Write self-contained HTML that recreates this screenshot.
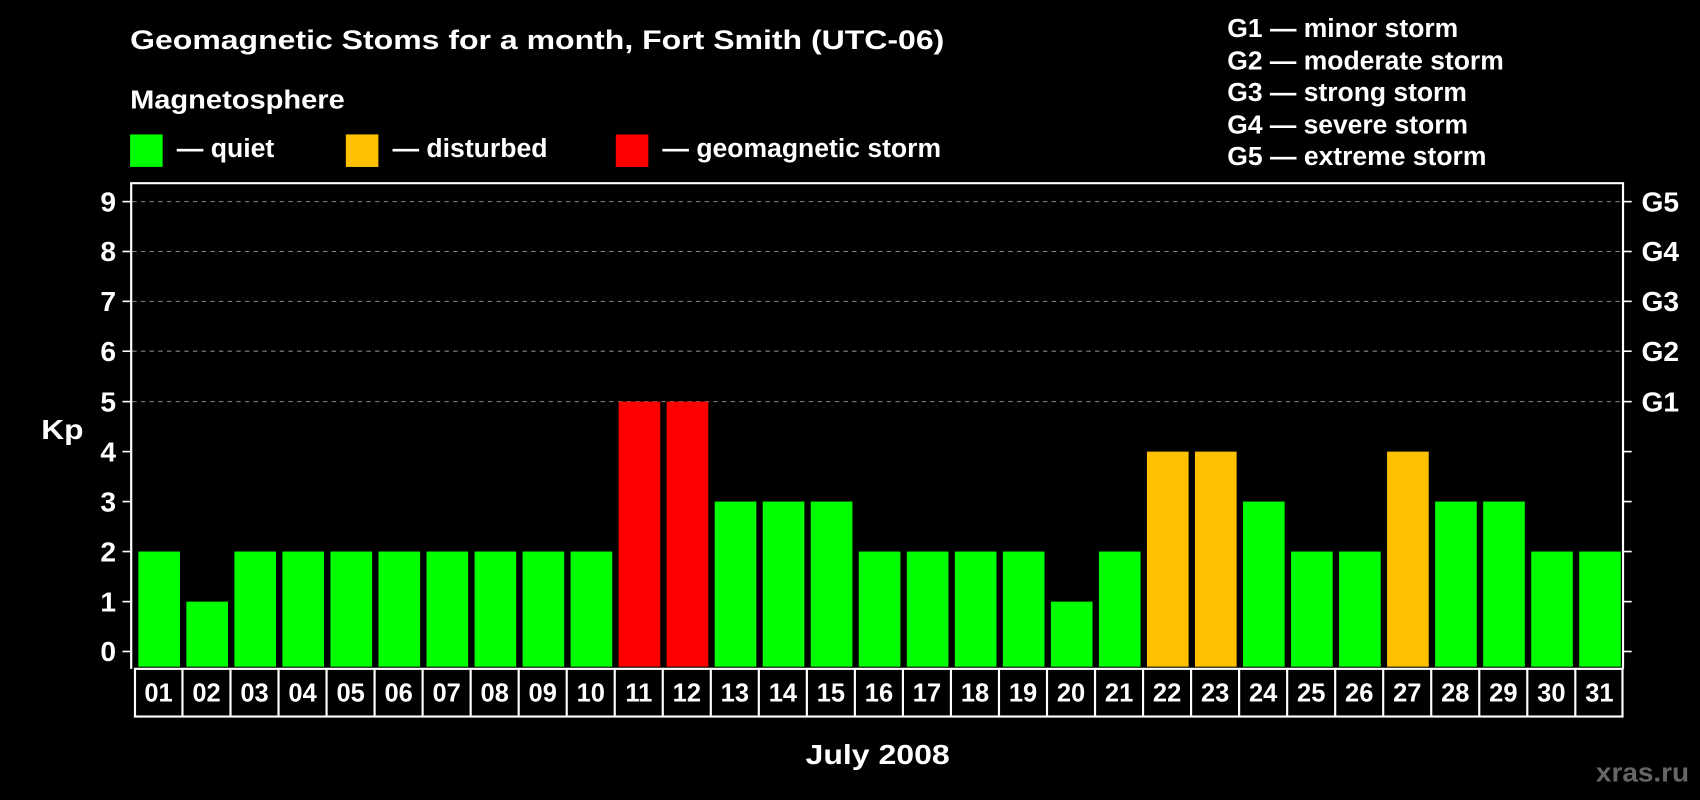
<!DOCTYPE html>
<html><head><style>html,body{margin:0;padding:0;background:#000;overflow:hidden}svg{display:block}text{font-family:"Liberation Sans",sans-serif;font-weight:bold;fill:#fff}</style></head>
<body>
<svg width="1700" height="800" viewBox="0 0 1568 738" preserveAspectRatio="none" xmlns="http://www.w3.org/2000/svg">
<rect width="1568" height="738" fill="#000"/>
<text x="120" y="45" font-size="25" textLength="751" lengthAdjust="spacingAndGlyphs">Geomagnetic Stoms for a month, Fort Smith (UTC-06)</text>
<text x="120" y="100" font-size="24" textLength="198" lengthAdjust="spacingAndGlyphs">Magnetosphere</text>
<rect x="120" y="124" width="30" height="30" fill="#00ff00"/>
<text x="163" y="145" font-size="24" textLength="90" lengthAdjust="spacingAndGlyphs">— quiet</text>
<rect x="319" y="124" width="30" height="30" fill="#ffc000"/>
<text x="362" y="145" font-size="24" textLength="143" lengthAdjust="spacingAndGlyphs">— disturbed</text>
<rect x="568" y="124" width="30" height="30" fill="#ff0000"/>
<text x="611" y="145" font-size="24" textLength="257" lengthAdjust="spacingAndGlyphs">— geomagnetic storm</text>
<g font-size="24">
<text x="1132" y="34" textLength="213" lengthAdjust="spacingAndGlyphs">G1 — minor storm</text>
<text x="1132" y="64" textLength="255" lengthAdjust="spacingAndGlyphs">G2 — moderate storm</text>
<text x="1132" y="93" textLength="221" lengthAdjust="spacingAndGlyphs">G3 — strong storm</text>
<text x="1132" y="123" textLength="222" lengthAdjust="spacingAndGlyphs">G4 — severe storm</text>
<text x="1132" y="152" textLength="239" lengthAdjust="spacingAndGlyphs">G5 — extreme storm</text>
</g>
<g stroke="#888" stroke-width="1" stroke-dasharray="4,4">
<line x1="122" y1="186" x2="1496" y2="186"/>
<line x1="122" y1="232" x2="1496" y2="232"/>
<line x1="122" y1="278" x2="1496" y2="278"/>
<line x1="122" y1="324" x2="1496" y2="324"/>
<line x1="122" y1="370.5" x2="1496" y2="370.5"/>
</g>
<g fill="#00ff00">
<rect x="127.6" y="508.8" width="38.4" height="106.2"/>
<rect x="171.9" y="555" width="38.4" height="60"/>
<rect x="216.2" y="508.8" width="38.4" height="106.2"/>
<rect x="260.5" y="508.8" width="38.4" height="106.2"/>
<rect x="304.8" y="508.8" width="38.4" height="106.2"/>
<rect x="349.1" y="508.8" width="38.4" height="106.2"/>
<rect x="393.4" y="508.8" width="38.4" height="106.2"/>
<rect x="437.7" y="508.8" width="38.4" height="106.2"/>
<rect x="482" y="508.8" width="38.4" height="106.2"/>
<rect x="526.3" y="508.8" width="38.4" height="106.2"/>
<rect x="659.2" y="462.7" width="38.4" height="152.3"/>
<rect x="703.5" y="462.7" width="38.4" height="152.3"/>
<rect x="747.8" y="462.7" width="38.4" height="152.3"/>
<rect x="792.1" y="508.8" width="38.4" height="106.2"/>
<rect x="836.4" y="508.8" width="38.4" height="106.2"/>
<rect x="880.7" y="508.8" width="38.4" height="106.2"/>
<rect x="925" y="508.8" width="38.4" height="106.2"/>
<rect x="969.3" y="555" width="38.4" height="60"/>
<rect x="1013.6" y="508.8" width="38.4" height="106.2"/>
<rect x="1146.5" y="462.7" width="38.4" height="152.3"/>
<rect x="1190.8" y="508.8" width="38.4" height="106.2"/>
<rect x="1235.1" y="508.8" width="38.4" height="106.2"/>
<rect x="1323.7" y="462.7" width="38.4" height="152.3"/>
<rect x="1368" y="462.7" width="38.4" height="152.3"/>
<rect x="1412.3" y="508.8" width="38.4" height="106.2"/>
<rect x="1456.6" y="508.8" width="38.4" height="106.2"/>
</g>
<g fill="#ff0000">
<rect x="570.6" y="370.5" width="38.4" height="244.5"/>
<rect x="614.9" y="370.5" width="38.4" height="244.5"/>
</g>
<g fill="#ffc000">
<rect x="1057.9" y="416.6" width="38.4" height="198.4"/>
<rect x="1102.2" y="416.6" width="38.4" height="198.4"/>
<rect x="1279.4" y="416.6" width="38.4" height="198.4"/>
</g>
<path d="M121 617 V169 H1497 V617" fill="none" stroke="#fff" stroke-width="2"/>
<g stroke="#fff" stroke-width="1.5">
<line x1="113" y1="186" x2="121" y2="186"/><line x1="113" y1="232" x2="121" y2="232"/><line x1="113" y1="278" x2="121" y2="278"/><line x1="113" y1="324" x2="121" y2="324"/><line x1="113" y1="370.5" x2="121" y2="370.5"/><line x1="113" y1="416.6" x2="121" y2="416.6"/><line x1="113" y1="462.7" x2="121" y2="462.7"/><line x1="113" y1="508.8" x2="121" y2="508.8"/><line x1="113" y1="555" x2="121" y2="555"/><line x1="113" y1="601" x2="121" y2="601"/>
<line x1="1497" y1="186" x2="1505" y2="186"/><line x1="1497" y1="232" x2="1505" y2="232"/><line x1="1497" y1="278" x2="1505" y2="278"/><line x1="1497" y1="324" x2="1505" y2="324"/><line x1="1497" y1="370.5" x2="1505" y2="370.5"/><line x1="1497" y1="416.6" x2="1505" y2="416.6"/><line x1="1497" y1="462.7" x2="1505" y2="462.7"/><line x1="1497" y1="508.8" x2="1505" y2="508.8"/><line x1="1497" y1="555" x2="1505" y2="555"/><line x1="1497" y1="601" x2="1505" y2="601"/>
</g>
<g font-size="26" text-anchor="end">
<text x="107" y="195">9</text><text x="107" y="241">8</text><text x="107" y="287">7</text><text x="107" y="333">6</text><text x="107" y="379.5">5</text><text x="107" y="425.6">4</text><text x="107" y="471.7">3</text><text x="107" y="517.8">2</text><text x="107" y="564">1</text><text x="107" y="610">0</text>
</g>
<text x="38" y="405" font-size="26" textLength="39" lengthAdjust="spacingAndGlyphs">Kp</text>
<g font-size="26">
<text x="1514" y="195">G5</text><text x="1514" y="241">G4</text><text x="1514" y="287">G3</text><text x="1514" y="333">G2</text><text x="1514" y="379.5">G1</text>
</g>
<rect x="124.5" y="617" width="1372" height="44" fill="none" stroke="#fff" stroke-width="2"/>
<g stroke="#fff" stroke-width="2">
<line x1="168.3" y1="617" x2="168.3" y2="661"/><line x1="212.6" y1="617" x2="212.6" y2="661"/><line x1="256.9" y1="617" x2="256.9" y2="661"/><line x1="301.2" y1="617" x2="301.2" y2="661"/><line x1="345.5" y1="617" x2="345.5" y2="661"/><line x1="389.8" y1="617" x2="389.8" y2="661"/><line x1="434.1" y1="617" x2="434.1" y2="661"/><line x1="478.4" y1="617" x2="478.4" y2="661"/><line x1="522.7" y1="617" x2="522.7" y2="661"/><line x1="567" y1="617" x2="567" y2="661"/><line x1="611.3" y1="617" x2="611.3" y2="661"/><line x1="655.6" y1="617" x2="655.6" y2="661"/><line x1="699.9" y1="617" x2="699.9" y2="661"/><line x1="744.2" y1="617" x2="744.2" y2="661"/><line x1="788.5" y1="617" x2="788.5" y2="661"/><line x1="832.8" y1="617" x2="832.8" y2="661"/><line x1="877.1" y1="617" x2="877.1" y2="661"/><line x1="921.4" y1="617" x2="921.4" y2="661"/><line x1="965.7" y1="617" x2="965.7" y2="661"/><line x1="1010" y1="617" x2="1010" y2="661"/><line x1="1054.3" y1="617" x2="1054.3" y2="661"/><line x1="1098.6" y1="617" x2="1098.6" y2="661"/><line x1="1142.9" y1="617" x2="1142.9" y2="661"/><line x1="1187.2" y1="617" x2="1187.2" y2="661"/><line x1="1231.5" y1="617" x2="1231.5" y2="661"/><line x1="1275.8" y1="617" x2="1275.8" y2="661"/><line x1="1320.1" y1="617" x2="1320.1" y2="661"/><line x1="1364.4" y1="617" x2="1364.4" y2="661"/><line x1="1408.7" y1="617" x2="1408.7" y2="661"/><line x1="1453" y1="617" x2="1453" y2="661"/>
</g>
<g font-size="23.5" text-anchor="middle">
<text x="146.2" y="647">01</text><text x="190.5" y="647">02</text><text x="234.8" y="647">03</text><text x="279.1" y="647">04</text><text x="323.4" y="647">05</text><text x="367.7" y="647">06</text><text x="412" y="647">07</text><text x="456.3" y="647">08</text><text x="500.6" y="647">09</text><text x="544.9" y="647">10</text><text x="589.2" y="647">11</text><text x="633.5" y="647">12</text><text x="677.8" y="647">13</text><text x="722.1" y="647">14</text><text x="766.4" y="647">15</text><text x="810.7" y="647">16</text><text x="855" y="647">17</text><text x="899.3" y="647">18</text><text x="943.6" y="647">19</text><text x="987.9" y="647">20</text><text x="1032.2" y="647">21</text><text x="1076.5" y="647">22</text><text x="1120.8" y="647">23</text><text x="1165.1" y="647">24</text><text x="1209.4" y="647">25</text><text x="1253.7" y="647">26</text><text x="1298" y="647">27</text><text x="1342.3" y="647">28</text><text x="1386.6" y="647">29</text><text x="1430.9" y="647">30</text><text x="1475.2" y="647">31</text>
</g>
<text x="743" y="705" font-size="26" textLength="133" lengthAdjust="spacingAndGlyphs">July 2008</text>
<text x="1472" y="721" font-size="24" textLength="86" lengthAdjust="spacingAndGlyphs" style="fill:#666">xras.ru</text>
</svg>
</body></html>
